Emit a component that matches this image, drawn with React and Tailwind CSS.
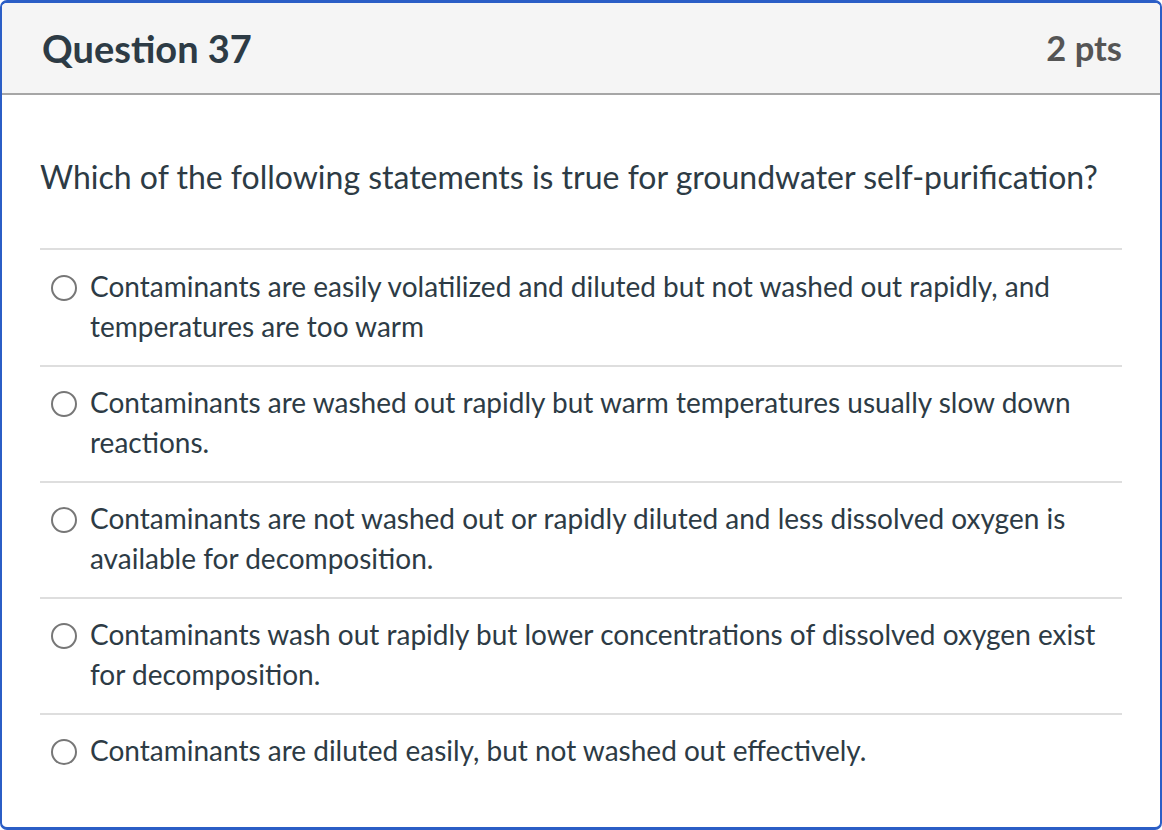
import React from "react";

const ANSWERS = [
  "Contaminants are easily volatilized and diluted but not washed out rapidly, and temperatures are too warm",
  "Contaminants are washed out rapidly but warm temperatures usually slow down reactions.",
  "Contaminants are not washed out or rapidly diluted and less dissolved oxygen is available for decomposition.",
  "Contaminants wash out rapidly but lower concentrations of dissolved oxygen exist for decomposition.",
  "Contaminants are diluted easily, but not washed out effectively.",
];

const Radio = () => (
  <span className="mt-[7px] block h-[26px] w-[26px] shrink-0 rounded-full border-2 border-[#777777] bg-white" />
);

export default function App() {
  return (
    <div className="h-[830px] w-[1162px] bg-white font-['Lato',sans-serif] text-[#2d3b45]">
      <div className="flex h-full flex-col overflow-hidden rounded-[7px] border-x-2 border-t-[3px] border-b-[3px] border-[#2b5ec6]">
        {/* header */}
        <div className="flex h-[92px] shrink-0 items-center justify-between border-b-2 border-[#a6a6a6] bg-[#f5f5f5] pl-[40px] pr-[38px]">
          <h2 className="text-[38px] font-bold leading-none">Question 37</h2>
          <span className="text-[34.5px] font-bold leading-none text-[#555555]">2 pts</span>
        </div>

        {/* body */}
        <div className="flex-1 px-[38px] pt-[62px]">
          <p className="text-[32px] leading-[40px]">
            Which of the following statements is true for groundwater self-purification?
          </p>
          <div className="mt-[51px]">
            {ANSWERS.map((a, i) => (
              <div
                key={i}
                className={`flex gap-[13px] border-t-2 border-[#dedede] pl-[11px] pb-[17px] ${
                  i === 0 ? "pt-[18px]" : "pt-[17px]"
                }`}
              >
                <Radio />
                <span className="relative -top-[2px] text-[28px] leading-[40px]">{a}</span>
              </div>
            ))}
          </div>
        </div>
      </div>
    </div>
  );
}
